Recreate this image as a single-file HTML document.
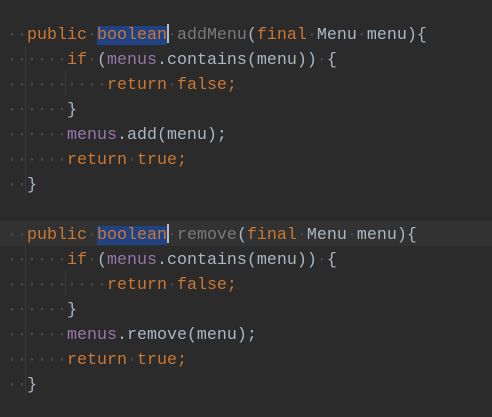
<!DOCTYPE html>
<html><head><style>
html,body{margin:0;padding:0;background:#2b2b2b;width:492px;height:417px;overflow:hidden}
.c{position:absolute;left:7px;top:23px;font-family:"Liberation Mono",monospace;font-size:16.67px;line-height:25px;color:#a9b7c6}
.l{height:25px;white-space:pre}
.k{color:#cc7832}.m{color:#7a7a7a}.p{color:#9876aa}.d{color:#4c4c4c}
.s{background:#214283}
.cur{position:absolute;left:0;top:221px;width:492px;height:25px;background:#323232}
.g{position:absolute;width:1px;background:#3b3b3b}
.caret{display:inline-block;width:2px;height:19px;background:#bbb;vertical-align:-4px;margin-right:-2px}
</style></head><body>
<div class="cur"></div>
<div class="g" style="left:25px;top:46px;height:150px"></div>
<div class="g" style="left:65px;top:71px;height:25px"></div>
<div class="g" style="left:25px;top:246px;height:150px"></div>
<div class="g" style="left:65px;top:271px;height:25px"></div>
<div class="c"><div class="l"><span class="d">··</span><span class="k">public</span><span class="d">·</span><span class="k s">boolean</span><span class="caret"></span><span class="d">·</span><span class="m">addMenu</span>(<span class="k">final</span><span class="d">·</span>Menu<span class="d">·</span>menu){</div><div class="l"><span class="d">······</span><span class="k">if</span><span class="d">·</span>(<span class="p">menus</span>.contains(menu))<span class="d">·</span>{</div><div class="l"><span class="d">··········</span><span class="k">return</span><span class="d">·</span><span class="k">false;</span></div><div class="l"><span class="d">······</span>}</div><div class="l"><span class="d">······</span><span class="p">menus</span>.add(menu);</div><div class="l"><span class="d">······</span><span class="k">return</span><span class="d">·</span><span class="k">true;</span></div><div class="l"><span class="d">··</span>}</div><div class="l"></div><div class="l"><span class="d">··</span><span class="k">public</span><span class="d">·</span><span class="k s">boolean</span><span class="caret"></span><span class="d">·</span><span class="m">remove</span>(<span class="k">final</span><span class="d">·</span>Menu<span class="d">·</span>menu){</div><div class="l"><span class="d">······</span><span class="k">if</span><span class="d">·</span>(<span class="p">menus</span>.contains(menu))<span class="d">·</span>{</div><div class="l"><span class="d">··········</span><span class="k">return</span><span class="d">·</span><span class="k">false;</span></div><div class="l"><span class="d">······</span>}</div><div class="l"><span class="d">······</span><span class="p">menus</span>.remove(menu);</div><div class="l"><span class="d">······</span><span class="k">return</span><span class="d">·</span><span class="k">true;</span></div><div class="l"><span class="d">··</span>}</div></div>
</body></html>
